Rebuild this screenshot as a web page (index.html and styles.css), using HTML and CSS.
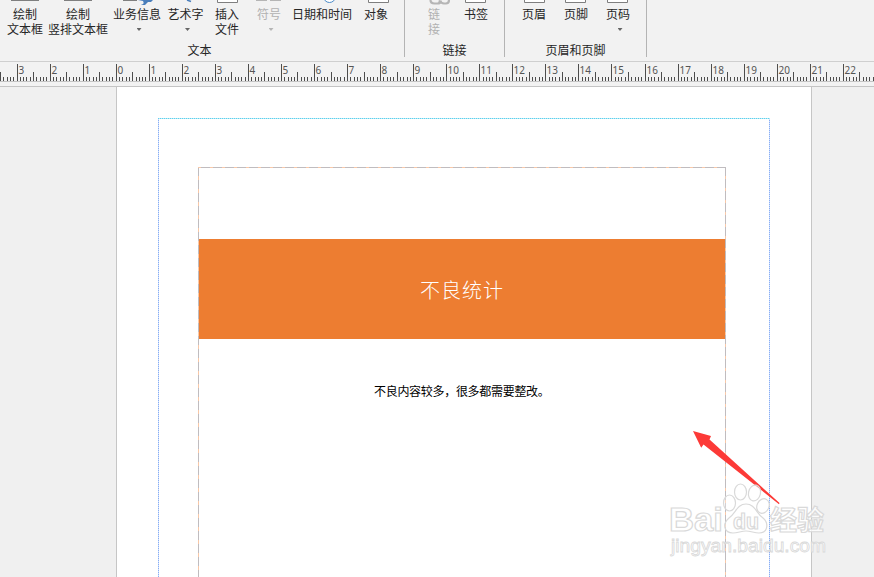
FILE: index.html
```html
<!DOCTYPE html>
<html lang="zh-CN">

<head>
    <meta charset="UTF-8">
    <meta name="viewport" content="width=device-width, initial-scale=1.0">
    <title>不良统计</title>
    <link rel="stylesheet" href="styles.css">
</head>

<body>

    <!-- Ribbon -->
    <div class="ribbon">
        <div class="group group-text">
            <div class="buttons">
                <div class="btn w44">
                    <svg class="icon" width="30" height="6"><path d="M1 0.5h28" stroke="#7f7f7f"/></svg>
                    <span>绘制<br>文本框</span>
                </div>
                <div class="btn w62">
                    <svg class="icon" width="30" height="6"><path d="M1 0.5h28" stroke="#7f7f7f"/></svg>
                    <span>绘制<br>竖排文本框</span>
                </div>
                <div class="btn w56">
                    <svg class="icon" width="32" height="6"><path d="M2 0.5h14" stroke="#7f7f7f"/><path d="M17 0h15l-2 2-3 0-3 3h-4c3-1 3-2 2-4z" fill="#4a7ebb"/></svg>
                    <span>业务信息</span>
                    <i class="arrow"></i>
                </div>
                <div class="btn w41">
                    <svg class="icon" width="20" height="6"><path d="M11 0l4 1.5" stroke="#4a7ebb" stroke-width="1.5"/></svg>
                    <span>艺术字</span>
                    <i class="arrow"></i>
                </div>
                <div class="btn w42">
                    <svg class="icon" width="22" height="6"><path d="M1.5 0v2.5h20V0" fill="#fff" stroke="#7f7f7f"/></svg>
                    <span>插入<br>文件</span>
                </div>
                <div class="btn w42 disabled">
                    <svg class="icon" width="26" height="6"><path d="M0 0.5h11M14 0.5h11" stroke="#b5b5b5"/></svg>
                    <span>符号</span>
                    <i class="arrow"></i>
                </div>
                <div class="btn w64">
                    <svg class="icon" width="30" height="6"><circle cx="22.5" cy="-3.5" r="6" fill="#fff" stroke="#4a8ac8"/></svg>
                    <span>日期和时间</span>
                </div>
                <div class="btn w44">
                    <svg class="icon" width="26" height="6"><path d="M5.5 0v2.5h20V0" fill="#fff" stroke="#7f7f7f"/></svg>
                    <span>对象</span>
                </div>
            </div>
            <div class="group-label">文本</div>
        </div>

        <div class="group group-link">
            <div class="buttons">
                <div class="btn w42 disabled">
                    <svg class="icon" width="32" height="6"><path d="M12.5 0q0 3.500 4 3.500h3q3 0 3.500-3M21 0.500q2 3 5 3h2q3 0 3-3.500" fill="none" stroke="#b5b5b5" stroke-width="2.2"/></svg>
                    <span>链<br>接</span>
                </div>
                <div class="btn w42">
                    <svg class="icon" width="22" height="6"><path d="M0.5 0v2.5h20V0" fill="#fff" stroke="#7f7f7f"/></svg>
                    <span>书签</span>
                </div>
            </div>
            <div class="group-label">链接</div>
        </div>

        <div class="group group-header">
            <div class="buttons">
                <div class="btn w42">
                    <svg class="icon" width="22" height="6"><path d="M1.5 0v2.5h20V0" fill="#fff" stroke="#7f7f7f"/></svg>
                    <span>页眉</span>
                </div>
                <div class="btn w42">
                    <svg class="icon" width="22" height="6"><path d="M0.5 0v2.5h20V0" fill="#fff" stroke="#7f7f7f"/></svg>
                    <span>页脚</span>
                </div>
                <div class="btn w42">
                    <svg class="icon" width="22" height="6"><path d="M0.5 0v2.5h20V0" fill="#fff" stroke="#7f7f7f"/></svg>
                    <span>页码</span>
                    <i class="arrow"></i>
                </div>
            </div>
            <div class="group-label">页眉和页脚</div>
        </div>
    </div>

    <!-- Ruler, ticks are added by the script -->
    <svg class="ruler" id="ruler" width="874" height="25"></svg>

    <!-- Document -->
    <div class="workspace">
        <div class="page">
            <div class="margin-guide">
                <div class="text-frame">
                    <div class="banner">不良统计</div>
                    <p class="content">不良内容较多，很多都需要整改。</p>
                </div>
            </div>
        </div>

        <svg class="pointer" width="90" height="76" viewBox="692 430 90 76">
            <path d="M693 431l18 5-1.500 3.500L779.500 503l-0.500 1.200L703.500 444.500l-2.300 3.300z" fill="#fc3a37"/>
        </svg>

        <svg class="watermark" width="170" height="90" viewBox="664 476 170 90">
            <g class="outline">
                <text x="669" y="531" font-size="34" textLength="54" lengthAdjust="spacingAndGlyphs">Bai</text>
                <g class="paw">
                    <ellipse cx="729.5" cy="503" rx="6" ry="8"/>
                    <ellipse cx="740.5" cy="492" rx="6" ry="8"/>
                    <ellipse cx="754.5" cy="493" rx="6" ry="8" transform="rotate(12 754.5 493)"/>
                    <ellipse cx="763" cy="506" rx="6" ry="7.500" transform="rotate(25 763 506)"/>
                    <path d="M746 504c-9 0-10 9-17 14-7 6-5 15 4 15 5 0 8-2 13-2s8 2 13 2c9 0 10-10 4-15-7-5-8-14-17-14z"/>
                </g>
                <text x="733" y="529" font-size="22" textLength="26" lengthAdjust="spacingAndGlyphs">du</text>
                <text class="cjk" x="770" y="530" font-size="27" textLength="54" lengthAdjust="spacingAndGlyphs">经验</text>
            </g>
            <text class="outline url" x="671" y="552" font-size="18" textLength="155" lengthAdjust="spacingAndGlyphs">jingyan.baidu.com</text>
        </svg>
    </div>

    <script>
        const ruler = document.getElementById('ruler');
        const zero = 116;
        const unit = 33.05;
        let ticks = '';
        let labels = '';

        for (let i = -36; i < 230; i++) {
            const x = Math.floor(zero + i * unit / 10 + 0.2) + 0.5;
            let top = 15;
            if (i % 10 === 0) {
                top = 2;
                labels += '<text x="' + (x + 1) + '" y="12">' + Math.abs(i / 10) + '</text>';
            } else if (i % 5 === 0) {
                top = 10;
            }
            ticks += 'M' + x + ' ' + top + 'V19';
        }

        ruler.innerHTML = '<path d="' + ticks + '" stroke="#4d4d4d"/>' +
            '<path d="M0 19.5H874M0 24.5H874" stroke="#c4c4c4"/>' + labels;
    </script>

</body>

</html>
```
FILE: styles.css
```css
* {
    box-sizing: border-box;
    margin: 0;
    padding: 0;
}

body {
    width: 874px;
    height: 577px;
    overflow: hidden;
    font-family: "Noto Sans CJK SC", sans-serif;
    font-size: 12px;
    color: #262626;
    background-color: #f2f2f2;
}

/* Ribbon */

.ribbon {
    display: flex;
    height: 62px;
    border-bottom: 1px solid #cfcfcf;
}

.group {
    height: 57px;
    border-right: 1px solid #b4b4b4;
}

.group-text {
    width: 405px;
    padding-left: 3px;
}

.group-link {
    width: 100px;
    padding-left: 8px;
}

.group-header {
    width: 142px;
    padding-left: 8px;
}

.buttons {
    display: flex;
    height: 42px;
}

.btn {
    display: flex;
    flex-direction: column;
    align-items: center;
    line-height: 15px;
    text-align: center;
    white-space: nowrap;
}

.btn.disabled {
    color: #b1b1b1;
}

.icon {
    display: block;
    flex: none;
}

.arrow {
    width: 5px;
    height: 3px;
    margin: 7px 0 0 4px;
    background-color: #666;
    clip-path: polygon(0 0, 100% 0, 50% 100%);
}

.disabled .arrow {
    background-color: #b5b5b5;
}

.w41 {
    width: 41px;
}

.w42 {
    width: 42px;
}

.w44 {
    width: 44px;
}

.w56 {
    width: 56px;
}

.w62 {
    width: 62px;
}

.w64 {
    width: 64px;
}

.group-label {
    line-height: 16px;
    text-align: center;
    padding-right: 8px;
}

/* Ruler */

.ruler {
    display: block;
    font-family: "Noto Sans", sans-serif;
    font-size: 10px;
    fill: #555;
}

/* Document */

.workspace {
    position: relative;
    height: 490px;
    padding-left: 116px;
    background-color: #f0f0f0;
}

.page {
    width: 696px;
    height: 490px;
    padding: 31px 41px 0;
    background-color: #fff;
    border-left: 1px solid #c6c6c6;
    border-right: 1px solid #c6c6c6;
}

.margin-guide {
    width: 612px;
    height: 459px;
    padding: 49px 40px 0;
    background:
        repeating-linear-gradient(90deg, #62c8f5 0 1px, #b4f3ee 1px 2px) 0 0 / 100% 1px no-repeat,
        repeating-linear-gradient(180deg, #86aef5 0 1px, #d3e0fc 1px 2px) 0 0 / 1px 100% no-repeat,
        repeating-linear-gradient(180deg, #86aef5 0 1px, #d3e0fc 1px 2px) 100% 0 / 1px 100% no-repeat;
}

.text-frame {
    width: 528px;
    height: 410px;
    padding: 72px 1px 0;
    background:
        repeating-linear-gradient(90deg, #f8c8a8 0 3px, #c0bcbf 3px 12px) 0 0 / 100% 1px no-repeat,
        repeating-linear-gradient(180deg, #c0bcbf 0 9px, #f8c8a8 9px 13px) 0 0 / 1px 100% no-repeat,
        repeating-linear-gradient(180deg, #c0bcbf 0 9px, #f8c8a8 9px 12px) 100% 0 / 1px 100% no-repeat;
}

.banner {
    height: 100px;
    line-height: 101px;
    font-size: 20px;
    font-weight: 300;
    letter-spacing: 1px;
    text-align: center;
    color: #fff;
    background-color: #ed7d31;
}

.content {
    margin-top: 43px;
    padding-left: 175px;
    line-height: 18px;
    letter-spacing: -0.3px;
    color: #000;
}

/* Overlays */

.watermark {
    position: absolute;
    left: 664px;
    top: 389px;
    font-family: "Liberation Sans", "Noto Sans CJK SC", sans-serif;
    font-weight: bold;
}

.outline {
    fill: rgba(255, 255, 255, 0.8);
    stroke: #d9d9d9;
    stroke-width: 1.2;
}

.paw {
    fill: rgba(255, 255, 255, 0.3);
}

.cjk {
    font-family: "Noto Sans CJK SC", sans-serif;
}

.url {
    font-weight: normal;
    stroke-width: 0.8;
}

.pointer {
    position: absolute;
    left: 692px;
    top: 343px;
}
```
